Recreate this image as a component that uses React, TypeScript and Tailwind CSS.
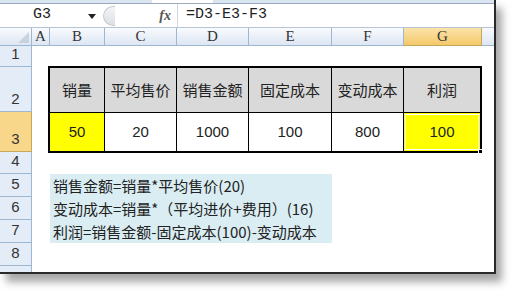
import React from "react";

const cjk = { fontFamily: '"Noto Sans CJK SC", "Liberation Sans", sans-serif' };
const num = { fontFamily: '"Liberation Sans", Arial, sans-serif' };
const serif = { fontFamily: '"Liberation Serif", "DejaVu Serif", serif' };
const mono = { fontFamily: '"Liberation Mono", "DejaVu Sans Mono", monospace' };

const colHdr = "flex items-center justify-center border-r border-b border-[#9eb6ce] bg-gradient-to-b from-[#f9fbfe] to-[#dde6f3] text-[15px] text-[#333]";
const rowHdr = "flex items-end justify-center border-b border-r border-[#9eb6ce] bg-[#e4ecf7] text-[15px] text-[#333] pb-[1px]";

const headers = ["销量", "平均售价", "销售金额", "固定成本", "变动成本", "利润"];
const values = ["50", "20", "1000", "100", "800", "100"];

export default function App() {
  return (
    <div className="w-[517px] h-[295px] bg-white overflow-hidden relative">
      <div className="w-[496px] h-[274px] flex flex-col border-r-2 border-b-2 border-[#2a2a2a] shadow-[6px_8px_8px_rgba(0,0,0,0.35)] bg-white overflow-hidden">
        {/* top band */}
        <div className="h-[4px] bg-[#dbe5f1] border-b border-[#9aabbf] relative shrink-0">
          <div className="absolute left-[152px] top-0 w-[61px] h-[3px] bg-white" />
        </div>
        {/* formula bar */}
        <div className="h-[24px] flex items-center border-b border-[#b8c4d4] shrink-0 bg-white">
          <div className="w-[100px] h-full flex items-center relative">
            <span className="absolute left-[33px] text-[15px] text-[#222]" style={mono}>G3</span>
            <svg className="absolute left-[88px] top-[10px]" width="8" height="5" viewBox="0 0 8 5">
              <path d="M0 0 H8 L4 5 Z" fill="#222" />
            </svg>
          </div>
          <div className="w-[12px] h-[20px] rounded-l-full border border-r-0 border-[#c4c9d0] bg-gradient-to-b from-[#f4f5f7] to-[#dcdfe4] ml-[3px]" />
          <div className="w-[62px] h-full flex items-center justify-end pr-[6px]">
            <span className="italic font-bold text-[14px] text-[#555]" style={serif}>fx</span>
          </div>
          <div className="w-px h-full bg-[#d0d6de]" />
          <div className="flex-1 pl-[8px] text-[15px] text-[#222]" style={mono}>=D3-E3-F3</div>
        </div>
        {/* sheet */}
        <div
          className="flex-1 grid relative"
          style={{
            gridTemplateColumns: "32px 18px 55px 72px 72px 83px 72px 78px 1fr",
            gridTemplateRows: "18px 21px 45px 40px 22px 23px 23px 23px 23px 1fr",
          }}
        >
          <div className={colHdr + " relative"} style={{ gridColumn: 1, gridRow: 1 }}>
            <svg className="absolute right-[2px] bottom-[2px]" width="11" height="11" viewBox="0 0 11 11">
              <path d="M11 0 V11 H0 Z" fill="#c9d3de" />
            </svg>
          </div>
          {["A", "B", "C", "D", "E", "F"].map((c, i) => (
            <div key={c} className={colHdr} style={{ ...serif, gridColumn: i + 2, gridRow: 1 }}>{c}</div>
          ))}
          <div
            className="flex items-center justify-center border-r border-b border-[#c5a75a] bg-gradient-to-b from-[#fbe3a8] to-[#f4c96a] text-[15px] text-[#333]"
            style={{ ...serif, gridColumn: 8, gridRow: 1 }}
          >
            G
          </div>
          <div className="border-b border-[#9eb6ce] bg-gradient-to-b from-[#f9fbfe] to-[#dde6f3]" style={{ gridColumn: 9, gridRow: 1 }} />

          {[1, 2, 4, 5, 6, 7, 8].map((r) => (
            <div key={r} className={rowHdr} style={{ ...num, gridColumn: 1, gridRow: r + 1 }}>{r}</div>
          ))}
          <div
            className="flex items-end justify-center border-b border-r border-[#c5a75a] bg-[#f8d68a] text-[15px] text-[#333] pb-[1px]"
            style={{ ...num, gridColumn: 1, gridRow: 4 }}
          >
            3
          </div>
          <div className="border-r border-[#9eb6ce] bg-[#e4ecf7]" style={{ gridColumn: 1, gridRow: 10 }} />

          {/* data table spanning B..G rows 2..3 */}
          <div
            className="grid border-2 border-black -ml-[2px] -mt-[1px] -mb-[1px]"
            style={{
              gridColumn: "3 / 9",
              gridRow: "3 / 5",
              gridTemplateColumns: "55px 72px 72px 83px 72px 1fr",
              gridTemplateRows: "45px 1fr",
            }}
          >
            {headers.map((h, i) => (
              <div
                key={h}
                className={"flex items-center justify-center bg-[#d9d9d9] border-b border-black text-[15px] text-[#222] " + (i < 5 ? "border-r" : "")}
                style={cjk}
              >
                {h}
              </div>
            ))}
            {values.map((v, i) => (
              <div
                key={i}
                className={
                  "flex items-center justify-center text-[15px] text-[#222] relative " +
                  (i < 5 ? "border-r border-black " : "") +
                  (i === 0 ? "bg-[#ffff00]" : i === 5 ? "bg-[#ffff00] outline outline-1 outline-white -outline-offset-2" : "bg-white")
                }
                style={num}
              >
                {v}
                {i === 5 && (
                  <div className="absolute -right-[3px] -bottom-[3px] w-[5px] h-[5px] bg-black border border-white" />
                )}
              </div>
            ))}
          </div>

          {/* formula note */}
          <div
            className="bg-[#daedf3] flex flex-col pl-[3px] text-[15px] text-[#222]"
            style={{ ...cjk, gridColumn: "3 / 7", gridRow: "6 / 9" }}
          >
            <div className="h-[23px] leading-[23px] whitespace-nowrap">销售金额=销量*平均售价(20)</div>
            <div className="h-[23px] leading-[23px] whitespace-nowrap">变动成本=销量*（平均进价+费用）(16)</div>
            <div className="h-[23px] leading-[23px] whitespace-nowrap">利润=销售金额-固定成本(100)-变动成本</div>
          </div>
        </div>
      </div>
    </div>
  );
}
